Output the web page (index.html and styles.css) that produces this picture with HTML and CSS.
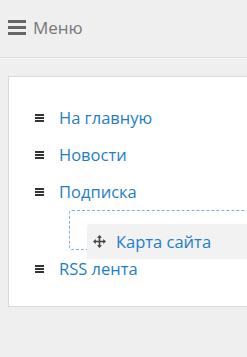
FILE: index.html
```html
<!DOCTYPE html>
<html lang="ru">
<head>
<meta charset="utf-8">
<link rel="stylesheet" href="styles.css">
</head>
<body>
<header class="header">
  <span class="burger"><i></i><i></i><i></i></span>
  <span class="title">Меню</span>
</header>
<div class="panel">
  <ul class="menu">
    <li class="item"><span class="bars"><i></i><i></i><i></i></span><a href="#">На главную</a></li>
    <li class="item"><span class="bars"><i></i><i></i><i></i></span><a href="#">Новости</a></li>
    <li class="item"><span class="bars"><i></i><i></i><i></i></span><a href="#">Подписка</a></li>
    <li class="placeholder"></li>
    <li class="item"><span class="bars"><i></i><i></i><i></i></span><a href="#">RSS лента</a></li>
  </ul>
  <div class="dragged">
    <svg class="move" width="13" height="13" viewBox="0 0 13 13"><path d="M6.5 0 L9 2.8 H7.3 V5.7 H10.2 V4 L13 6.5 L10.2 9 V7.3 H7.3 V10.2 H9 L6.5 13 L4 10.2 H5.7 V7.3 H2.8 V9 L0 6.5 L2.8 4 V5.7 H5.7 V2.8 H4 Z" fill="#444"/></svg>
    <a href="#">Карта сайта</a>
  </div>
</div>
</body>
</html>
```
FILE: styles.css
```css
html, body {
  margin: 0;
  padding: 0;
}
body {
  background: #efefef;
  font-family: "Open Sans", "Liberation Sans", sans-serif;
  overflow: hidden;
  width: 247px;
  height: 357px;
}
.header {
  display: flex;
  align-items: center;
  gap: 7px;
  height: 58px;
  padding: 0 0 0 8px;
  box-sizing: border-box;
  border-bottom: 1px solid #dcdcdc;
  box-shadow: 0 1px 0 #f8f8f8;
}
.burger {
  display: flex;
  flex-direction: column;
  gap: 3px;
  margin-top: -2px;
}
.burger i {
  display: block;
  width: 18px;
  height: 3px;
  background: #666;
}
.title {
  font-size: 17px;
  color: #777;
  margin-top: -2px;
}
.panel {
  position: relative;
  margin: 18px -30px 0 8px;
  background: #fff;
  border: 1px solid #dadada;
  padding: 22px 0 19px 26px;
}
.menu {
  list-style: none;
  margin: 0;
  padding: 0;
}
.item {
  display: flex;
  align-items: center;
  height: 37px;
  gap: 15px;
}
.bars {
  display: flex;
  flex-direction: column;
  gap: 1px;
  width: 9px;
}
.bars i {
  display: block;
  height: 2px;
  background: #333;
}
.item a, .dragged a {
  font-size: 16.5px;
  color: #1f7dc8;
  text-decoration: none;
}
.placeholder {
  height: 38px;
  margin-left: 34px;
  border: 1px dashed #79b1e4;
  border-radius: 3px;
}
.dragged {
  position: absolute;
  left: 78px;
  top: 147px;
  right: 0;
  height: 35px;
  background: #f2f2f2;
  border-radius: 3px;
  display: flex;
  align-items: center;
  gap: 10px;
  padding-left: 6px;
}
```
